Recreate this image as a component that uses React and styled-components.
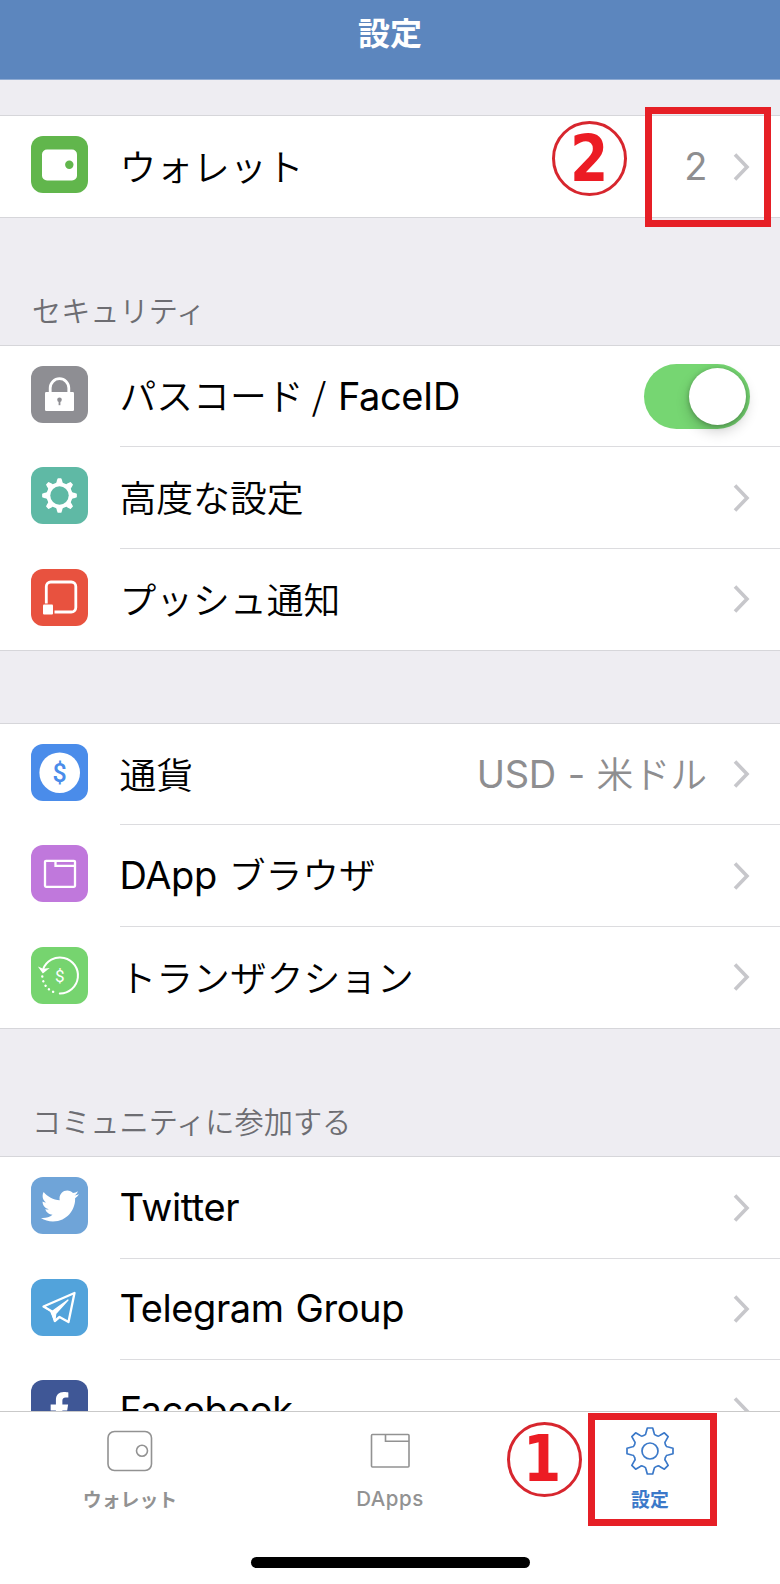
import React from "react";
import styled, { createGlobalStyle } from "styled-components";
import { FaFacebookF, FaTwitter } from "react-icons/fa";

const GlobalStyle = createGlobalStyle`
  * {
    box-sizing: border-box;
  }
  body {
    margin: 0;
    background: #fff;
    font-family: Inter, "Noto Sans CJK JP", sans-serif;
  }
`;

const Screen = styled.div`
  position: relative;
  display: flex;
  flex-direction: column;
  width: 780px;
  height: 1584px;
  overflow: hidden;
  background: #eeedf2;
`;

const Header = styled.header`
  display: flex;
  justify-content: center;
  height: 80px;
  flex-shrink: 0;
  padding-top: 7px;
  background: #5c86be;
  border-bottom: 1px solid #8fabd3;
`;

const Title = styled.h1`
  margin: 0;
  color: #fff;
  font-family: "Noto Sans CJK JP", sans-serif;
  font-size: 32px;
  font-weight: 700;
  line-height: 48px;
`;

const Content = styled.main`
  flex: 1;
  min-height: 0;
  overflow: hidden;
`;

const SectionTitle = styled.h2`
  display: flex;
  align-items: flex-end;
  height: ${(props) => props.$height}px;
  margin: 0;
  padding: 0 32px 15px;
  color: #6d6d72;
  font-family: "Noto Sans CJK JP", sans-serif;
  font-size: 29.2px;
  font-weight: 350;
  line-height: 42px;
`;

const Group = styled.section`
  border-top: 1px solid #d6d6da;
  border-bottom: 1px solid #d6d6da;
  background: #fff;
`;

const RowBox = styled.div`
  display: flex;
  height: 101.3px;
  padding-left: 31px;

  &:only-child {
    height: 100.5px;
  }
`;

const IconTile = styled.div`
  display: flex;
  align-items: center;
  justify-content: center;
  flex-shrink: 0;
  width: 57px;
  height: 57px;
  margin-top: 20px;
  border-radius: 12px;
  color: #fff;
  background: ${(props) => props.$color};
`;

const RowBody = styled.div`
  display: flex;
  flex: 1;
  align-items: center;
  margin-left: 31.5px;
  padding-right: 30px;

  ${RowBox}:not(:last-child) > & {
    border-bottom: 1px solid #dcdcdf;
  }
`;

const Label = styled.span`
  flex: 1;
  padding-bottom: 3px;
  color: #000;
  font-family: "Noto Sans CJK JP", sans-serif;
  font-size: 36.8px;
  font-weight: 350;
  line-height: 54px;
  white-space: pre;
`;

const Latin = styled.span`
  font-family: Inter, sans-serif;
  font-size: 38px;
  font-weight: 400;
  letter-spacing: -0.4px;
  word-spacing: 1.6px;
`;

const Value = styled(Label)`
  flex: none;
  margin-right: 26px;
  color: #8e8e90;
`;

const Switch = styled.div`
  display: flex;
  justify-content: flex-end;
  width: 106px;
  height: 65px;
  margin-right: 0.5px;
  padding: 4px;
  border-radius: 33px;
  background: #76d672;
`;

const Knob = styled.div`
  width: 57px;
  height: 57px;
  border-radius: 50%;
  background: #fff;
  box-shadow: 0 6px 14px rgba(0, 0, 0, 0.2), 0 1px 5px rgba(0, 0, 0, 0.25);
`;

const TabBar = styled.nav`
  display: grid;
  grid-template-columns: repeat(3, 1fr);
  grid-template-rows: 145px 12px;
  flex-shrink: 0;
  height: 173px;
  border-top: 1px solid #c9c9c9;
  background: #fff;
`;

const Tab = styled.div`
  display: flex;
  flex-direction: column;
  align-items: center;
  padding-top: 14px;
  color: ${(props) => (props.$active ? "#3b79c9" : "#929292")};
`;

const TabLabel = styled.span`
  margin-top: 9px;
  font-family: ${(props) => (props.$latin ? "Inter" : '"Noto Sans CJK JP"')}, sans-serif;
  font-size: ${(props) => (props.$latin ? 20.5 : 18.9)}px;
  font-weight: ${(props) => (props.$latin ? 500 : 700)};
  letter-spacing: ${(props) => (props.$latin ? "0.5px" : "0")};
  line-height: 28px;
`;

const HomeIndicator = styled.div`
  grid-column: 1 / -1;
  justify-self: center;
  width: 279px;
  height: 11px;
  border-radius: 6px;
  background: #000;
`;

// red tutorial marks lying over the screen
const Frame = styled.div`
  position: absolute;
  left: ${(props) => props.$x}px;
  top: ${(props) => props.$y}px;
  width: ${(props) => props.$w}px;
  height: ${(props) => props.$h}px;
  border: 7px solid #e61f26;
`;

const Step = styled.div`
  position: absolute;
  left: ${(props) => props.$x}px;
  top: ${(props) => props.$y}px;
  display: flex;
  align-items: center;
  justify-content: center;
  width: 75px;
  height: 75px;
  border: 3px solid #d7262e;
  border-radius: 50%;
  color: #ec1c24;
  font-family: "DejaVu Sans", sans-serif;
  font-size: 64px;
  font-weight: 700;
  line-height: 69px;

  span {
    transform: ${(props) => props.$nudge} scaleX(0.86);
  }
`;

const Chevron = () => (
  <svg width="17" height="30" viewBox="0 0 17 30" fill="none" stroke="#c7c7cb" strokeWidth="3.6">
    <path d="M2 2.5 14 15 2 27.500" />
  </svg>
);

// eight toothed outline around (0, 0)
function gearPath(outer, root, top, base, flare) {
  const parts = [];
  for (let i = 0; i < 8; i++) {
    const a = (i * Math.PI) / 4;
    const at = (x, y) =>
      `${(x * Math.cos(a) + y * Math.sin(a)).toFixed(2)} ${(x * Math.sin(a) - y * Math.cos(a)).toFixed(2)}`;
    const neck = root + 2;
    const low = root - 0.6;
    parts.push(
      `${i ? "L" : "M"}${at(-base - flare, low)} Q${at(-base, root)} ${at(-base, neck)} L${at(-top, outer)} L${at(top, outer)} L${at(base, neck)} Q${at(base, root)} ${at(base + flare, low)}`
    );
  }
  return parts.join(" ") + "Z";
}

const WalletIcon = () => (
  <svg width="57" height="57" viewBox="0 0 57 57">
    <rect x="11" y="13.500" width="35" height="31" rx="5" fill="#fff" />
    <circle cx="38.300" cy="28.700" r="4.200" fill="#61b64c" />
  </svg>
);

const LockIcon = () => (
  <svg width="57" height="57" viewBox="0 0 57 57">
    <path d="M19.200 28v-6a9.300 9.300 0 0 1 18.600 0v6" fill="none" stroke="#fff" strokeWidth="2.800" />
    <rect x="14" y="26" width="29" height="19" rx="1.200" fill="#fff" />
    <circle cx="28.500" cy="33.700" r="2.300" fill="#8e8e93" />
    <path d="M28.500 33.700v5.500" stroke="#8e8e93" strokeWidth="1.800" />
  </svg>
);

const GearIcon = () => (
  <svg width="57" height="57" viewBox="-28.500 -28.500 57 57">
    <path
      d={gearPath(16.6, 12.4, 1.3, 2, 1.4)}
      fill="#fff"
      stroke="#fff"
      strokeWidth="1.500"
      strokeLinejoin="round"
    />
    <circle r="9.200" fill="#5fb9a5" />
  </svg>
);

const PushIcon = () => (
  <svg width="57" height="57" viewBox="0 0 57 57">
    <rect x="15.300" y="13" width="29.500" height="30" rx="4.500" fill="none" stroke="#fff" strokeWidth="2.800" />
    <rect x="11" y="34.500" width="12.500" height="12.500" fill="#e8523f" />
    <rect x="12" y="35.500" width="10" height="10" rx="1" fill="#fff" />
  </svg>
);

const CurrencyIcon = () => (
  <svg width="57" height="57" viewBox="0 0 57 57">
    <circle cx="28.700" cy="28.700" r="20.300" fill="#fff" />
    <text x="28.700" y="37.500" textAnchor="middle" fontFamily="Roboto" fontSize="25" fontWeight="500" fill="#4a8cea">
      $
    </text>
  </svg>
);

const BrowserIcon = () => (
  <svg width="57" height="57" viewBox="0 0 57 57" fill="none" stroke="#fff" strokeWidth="2.300">
    <rect x="14" y="15.800" width="30" height="26" rx="1" />
    <path d="M24.500 15.800v5H44" />
  </svg>
);

const HistoryIcon = () => (
  <svg width="57" height="57" viewBox="0 0 57 57" fill="none" stroke="#fff" strokeWidth="2">
    <path d="M12 22.500A18 18 0 1 1 28.800 46.500" strokeLinecap="round" />
    <path d="M11.300 29.500A18 18 0 0 0 24 45.500" strokeLinecap="round" strokeDasharray="0.1 4.800" strokeWidth="2.400" />
    <path d="M8.800 21 12 25.500 16.500 22 12.200 22.500Z" fill="#fff" strokeWidth="1.300" />
    <text x="28.800" y="34.600" textAnchor="middle" fontFamily="Roboto" fontSize="17" fill="#fff" stroke="none">
      $
    </text>
  </svg>
);

const TelegramIcon = () => (
  <svg width="57" height="57" viewBox="0 0 57 57" fill="none" stroke="#fff" strokeWidth="2.300" strokeLinejoin="round">
    <path d="M12.500 27.500 43.500 14 37.500 43 28.500 38 23.800 42 21 32.500Z" />
    <path d="M12.500 27.500 21 32.500 37 21 24.800 34.500 23.800 42 19.500 32Z" fill="#fff" strokeWidth="1.200" />
  </svg>
);

const WalletTabIcon = () => (
  <svg width="48" height="50" viewBox="0 0 48 50" fill="none" stroke="currentColor" strokeWidth="1.600">
    <rect x="2" y="5.500" width="43.500" height="39" rx="6.500" />
    <circle cx="36" cy="24.700" r="5.500" />
  </svg>
);

const DAppsTabIcon = () => (
  <svg width="48" height="50" viewBox="0 0 48 50" fill="none" stroke="currentColor" strokeWidth="1.600">
    <rect x="5.500" y="8.500" width="37.500" height="32.500" rx="1" />
    <path d="M19.500 8.500v6.700H43" />
  </svg>
);

const SettingsTabIcon = () => (
  <svg width="50" height="50" viewBox="-25 -25 50 50" fill="none" stroke="currentColor" strokeWidth="1.700">
    <path d={gearPath(23, 16.3, 2.7, 4, 1.8)} strokeLinejoin="round" />
    <circle r="8" />
  </svg>
);

function Row({ icon, color, children, value, control }) {
  return (
    <RowBox>
      <IconTile $color={color}>{icon}</IconTile>
      <RowBody>
        <Label>{children}</Label>
        {value && <Value>{value}</Value>}
        {control || <Chevron />}
      </RowBody>
    </RowBox>
  );
}

export default function App() {
  return (
    <>
      <GlobalStyle />
      <Screen>
        <Header>
          <Title>設定</Title>
        </Header>
        <Content>
          <SectionTitle $height={35.4} />
          <Group>
            <Row icon={<WalletIcon />} color="#61b64c" value={<Latin>2</Latin>}>
              ウォレット
            </Row>
          </Group>

          <SectionTitle $height={127.3}>セキュリティ</SectionTitle>
          <Group>
            <Row
              icon={<LockIcon />}
              color="#8e8e93"
              control={
                <Switch>
                  <Knob />
                </Switch>
              }
            >
              パスコード /<Latin> FaceID</Latin>
            </Row>
            <Row icon={<GearIcon />} color="#5fb9a5">
              高度な設定
            </Row>
            <Row icon={<PushIcon />} color="#e8523f">
              プッシュ通知
            </Row>
          </Group>

          <SectionTitle $height={72} />
          <Group>
            <Row
              icon={<CurrencyIcon />}
              color="#4a8cea"
              value={
                <>
                  <Latin>USD - </Latin>米ドル
                </>
              }
            >
              通貨
            </Row>
            <Row icon={<BrowserIcon />} color="#c078dc">
              <Latin>DApp </Latin>ブラウザ
            </Row>
            <Row icon={<HistoryIcon />} color="#76d46f">
              トランザクション
            </Row>
          </Group>

          <SectionTitle $height={127.5}>コミュニティに参加する</SectionTitle>
          <Group>
            <Row icon={<FaTwitter size={38} />} color="#6fa4d8">
              <Latin>Twitter</Latin>
            </Row>
            <Row icon={<TelegramIcon />} color="#52a3db">
              <Latin>Telegram Group</Latin>
            </Row>
            <Row icon={<FaFacebookF size={33} />} color="#3f5796">
              <Latin>Facebook</Latin>
            </Row>
          </Group>
        </Content>

        <TabBar>
          <Tab>
            <WalletTabIcon />
            <TabLabel>ウォレット</TabLabel>
          </Tab>
          <Tab>
            <DAppsTabIcon />
            <TabLabel $latin>DApps</TabLabel>
          </Tab>
          <Tab $active>
            <SettingsTabIcon />
            <TabLabel>設定</TabLabel>
          </Tab>
          <HomeIndicator />
        </TabBar>

        <Step $x={552} $y={121} $nudge="translate(0, 1px)">
          <span>2</span>
        </Step>
        <Frame $x={645} $y={107} $w={125.5} $h={120} />
        <Step $x={507} $y={1422} $nudge="translate(-2px, 0)">
          <span>1</span>
        </Step>
        <Frame $x={588} $y={1413} $w={129} $h={113} />
      </Screen>
    </>
  );
}
